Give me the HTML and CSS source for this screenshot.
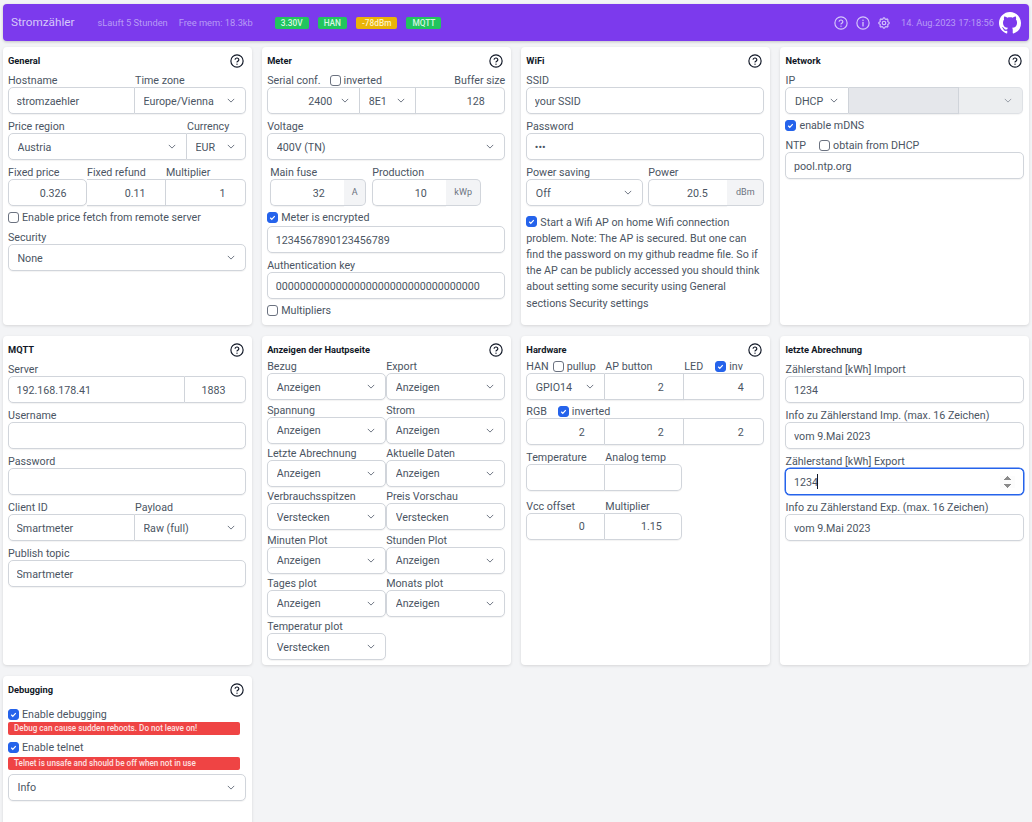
FILE: index.html
```html
<!DOCTYPE html>
<html lang="en">
<head>
    <meta charset="UTF-8">
    <meta name="viewport" content="width=device-width, initial-scale=1.0">
    <title>Stromzähler</title>
    <link rel="stylesheet" href="styles.css">
</head>
<body>
    <svg class="defs" width="0" height="0">
        <symbol id="help" viewBox="0 0 24 24">
            <circle cx="12" cy="12" r="10.5" fill="none" stroke="currentColor" stroke-width="2"/>
            <path d="M8.8 9a3.3 3.3 0 0 1 6.4 1c0 2.2-3.2 3-3.2 3.6" fill="none" stroke="currentColor" stroke-width="2" stroke-linecap="round"/>
            <circle cx="12" cy="17.4" r="1.2" fill="currentColor"/>
        </symbol>
        <symbol id="info" viewBox="0 0 24 24">
            <circle cx="12" cy="12" r="10.5" fill="none" stroke="currentColor" stroke-width="2"/>
            <path d="M12 11v6" fill="none" stroke="currentColor" stroke-width="2.2" stroke-linecap="round"/>
            <circle cx="12" cy="7.4" r="1.3" fill="currentColor"/>
        </symbol>
        <symbol id="gear" viewBox="0 0 24 24">
            <path d="M10.325 4.317c.426-1.756 2.924-1.756 3.35 0a1.724 1.724 0 002.573 1.066c1.543-.94 3.31.826 2.37 2.37a1.724 1.724 0 001.065 2.572c1.756.426 1.756 2.924 0 3.35a1.724 1.724 0 00-1.066 2.573c.94 1.543-.826 3.31-2.37 2.37a1.724 1.724 0 00-2.572 1.065c-.426 1.756-2.924 1.756-3.35 0a1.724 1.724 0 00-2.573-1.066c-1.543.94-3.31-.826-2.37-2.37a1.724 1.724 0 00-1.065-2.572c-1.756-.426-1.756-2.924 0-3.35a1.724 1.724 0 001.066-2.573c-.94-1.543.826-3.31 2.37-2.37.996.608 2.296.07 2.572-1.065z" fill="none" stroke="currentColor" stroke-width="2"/>
            <circle cx="12" cy="12" r="3" fill="none" stroke="currentColor" stroke-width="2"/>
        </symbol>
    </svg>

    <header class="topbar">
        <span class="brand">Stromzähler</span>
        <span class="stat stat-up">sLauft 5 Stunden</span>
        <span class="stat stat-mem">Free mem: 18.3kb</span>
        <span class="badge green first">3.30V</span>
        <span class="badge green">HAN</span>
        <span class="badge yellow">-78dBm</span>
        <span class="badge green">MQTT</span>
        <div class="topbar-right">
            <svg class="top-icon"><use href="#help"/></svg>
            <svg class="top-icon"><use href="#info"/></svg>
            <svg class="top-icon"><use href="#gear"/></svg>
            <span class="clock">14. Aug.2023 17:18:56</span>
            <svg class="github" viewBox="0 0 16 16"><path fill="#fff" d="M8 0C3.58 0 0 3.58 0 8c0 3.54 2.29 6.53 5.47 7.59.4.07.55-.17.55-.38 0-.19-.01-.82-.01-1.49-2.01.37-2.53-.49-2.69-.94-.09-.23-.48-.94-.82-1.13-.28-.15-.68-.52-.01-.53.63-.01 1.08.58 1.23.82.72 1.21 1.87.87 2.33.66.07-.52.28-.87.51-1.07-1.78-.2-3.64-.89-3.64-3.95 0-.87.31-1.59.82-2.15-.08-.2-.36-1.02.08-2.12 0 0 .67-.21 2.2.82.64-.18 1.32-.27 2-.27.68 0 1.36.09 2 .27 1.53-1.04 2.2-.82 2.2-.82.44 1.1.16 1.92.08 2.12.51.56.82 1.27.82 2.15 0 3.07-1.87 3.75-3.65 3.95.29.25.54.73.54 1.48 0 1.07-.01 1.93-.01 2.2 0 .21.15.46.55.38A8.013 8.013 0 0016 8c0-4.42-3.58-8-8-8z"/></svg>
        </div>
    </header>

    <main class="cards">
        <!-- first row -->
        <section class="card">
            <div class="card-head"><strong>General</strong><svg class="help"><use href="#help"/></svg></div>
            <div class="row cols-host">
                <label>Hostname</label><label>Time zone</label>
                <input class="ctl join-l" type="text" value="stromzaehler">
                <select class="ctl join-r"><option>Europe/Vienna</option></select>
            </div>
            <div class="row cols-price">
                <label>Price region</label><label>Currency</label>
                <select class="ctl join-l"><option>Austria</option></select>
                <select class="ctl join-r"><option>EUR</option></select>
            </div>
            <div class="row cols-3">
                <label>Fixed price</label><label>Fixed refund</label><label>Multiplier</label>
                <input class="ctl num" type="text" value="0.326">
                <input class="ctl num join-m" type="text" value="0.11">
                <input class="ctl num join-r" type="text" value="1">
            </div>
            <label class="chk"><input type="checkbox">Enable price fetch from remote server</label>
            <div class="row">
                <label>Security</label>
                <select class="ctl"><option>None</option></select>
            </div>
        </section>

        <section class="card">
            <div class="card-head"><strong>Meter</strong><svg class="help"><use href="#help"/></svg></div>
            <div class="row cols-serial">
                <div class="label-line span-all">
                    <label>Serial conf.</label>
                    <label class="chk chk-inline ml-serial"><input type="checkbox">inverted</label>
                    <label class="push">Buffer size</label>
                </div>
                <select class="ctl join-l sel-right"><option>2400</option></select>
                <select class="ctl join-m"><option>8E1</option></select>
                <input class="ctl num join-r" type="text" value="128">
            </div>
            <div class="row">
                <label>Voltage</label>
                <select class="ctl"><option>400V (TN)</option></select>
            </div>
            <div class="row cols-fuse">
                <label>Main fuse</label><label>Production</label>
                <div class="joined"><input class="ctl num join-l" type="text" value="32"><span class="addon">A</span></div>
                <div class="joined"><input class="ctl num join-l" type="text" value="10"><span class="addon addon-wide">kWp</span></div>
            </div>
            <label class="chk chk-tall"><input type="checkbox" checked>Meter is encrypted</label>
            <input class="ctl block" type="text" value="1234567890123456789">
            <div class="row">
                <label>Authentication key</label>
                <input class="ctl" type="text" value="0000000000000000000000000000000000">
            </div>
            <label class="chk"><input type="checkbox">Multipliers</label>
        </section>

        <section class="card">
            <div class="card-head"><strong>WiFi</strong><svg class="help"><use href="#help"/></svg></div>
            <div class="row">
                <label>SSID</label>
                <input class="ctl" type="text" value="your SSID">
            </div>
            <div class="row">
                <label>Password</label>
                <input class="ctl" type="password" value="***">
            </div>
            <div class="row cols-power">
                <label>Power saving</label><label>Power</label>
                <select class="ctl"><option>Off</option></select>
                <div class="joined"><input class="ctl num join-l" type="text" value="20.5"><span class="addon addon-dbm">dBm</span></div>
            </div>
            <p class="note"><input type="checkbox" checked>Start a Wifi AP on home Wifi connection problem. Note: The AP is secured. But one can find the password on my github readme file. So if the AP can be publicly accessed you should think about setting some security using General sections Security settings</p>
        </section>

        <section class="card">
            <div class="card-head"><strong>Network</strong><svg class="help"><use href="#help"/></svg></div>
            <div class="row cols-ip">
                <label class="span-all">IP</label>
                <select class="ctl join-l"><option>DHCP</option></select>
                <input class="ctl join-m" type="text" disabled>
                <select class="ctl join-r" disabled><option></option></select>
            </div>
            <label class="chk"><input type="checkbox" checked>enable mDNS</label>
            <div class="row">
                <div class="label-line">
                    <label>NTP</label>
                    <label class="chk chk-inline ml-ntp"><input type="checkbox">obtain from DHCP</label>
                </div>
                <input class="ctl" type="text" value="pool.ntp.org">
            </div>
        </section>

        <!-- second row -->
        <section class="card">
            <div class="card-head"><strong>MQTT</strong><svg class="help"><use href="#help"/></svg></div>
            <div class="row cols-server">
                <label class="span-all">Server</label>
                <input class="ctl join-l" type="text" value="192.168.178.41">
                <input class="ctl num join-r" type="text" value="1883">
            </div>
            <div class="row">
                <label>Username</label>
                <input class="ctl" type="text">
            </div>
            <div class="row">
                <label>Password</label>
                <input class="ctl" type="password">
            </div>
            <div class="row cols-host">
                <label>Client ID</label><label>Payload</label>
                <input class="ctl join-l" type="text" value="Smartmeter">
                <select class="ctl join-r"><option>Raw (full)</option></select>
            </div>
            <div class="row">
                <label>Publish topic</label>
                <input class="ctl" type="text" value="Smartmeter">
            </div>
        </section>

        <section class="card">
            <div class="card-head"><strong>Anzeigen der Hautpseite</strong><svg class="help"><use href="#help"/></svg></div>
            <div class="row tight cols-2">
                <label>Bezug</label><label>Export</label>
                <select class="ctl"><option>Anzeigen</option></select>
                <select class="ctl"><option>Anzeigen</option></select>
            </div>
            <div class="row tight cols-2">
                <label>Spannung</label><label>Strom</label>
                <select class="ctl"><option>Anzeigen</option></select>
                <select class="ctl"><option>Anzeigen</option></select>
            </div>
            <div class="row tight cols-2">
                <label>Letzte Abrechnung</label><label>Aktuelle Daten</label>
                <select class="ctl"><option>Anzeigen</option></select>
                <select class="ctl"><option>Anzeigen</option></select>
            </div>
            <div class="row tight cols-2">
                <label>Verbrauchsspitzen</label><label>Preis Vorschau</label>
                <select class="ctl"><option>Verstecken</option></select>
                <select class="ctl"><option>Verstecken</option></select>
            </div>
            <div class="row tight cols-2">
                <label>Minuten Plot</label><label>Stunden Plot</label>
                <select class="ctl"><option>Anzeigen</option></select>
                <select class="ctl"><option>Anzeigen</option></select>
            </div>
            <div class="row tight cols-2">
                <label>Tages plot</label><label>Monats plot</label>
                <select class="ctl"><option>Anzeigen</option></select>
                <select class="ctl"><option>Anzeigen</option></select>
            </div>
            <div class="row tight cols-2">
                <label>Temperatur plot</label><span></span>
                <select class="ctl"><option>Verstecken</option></select>
            </div>
        </section>

        <section class="card">
            <div class="card-head"><strong>Hardware</strong><svg class="help"><use href="#help"/></svg></div>
            <div class="row tight cols-3">
                <div class="label-line">
                    <label>HAN</label>
                    <label class="chk chk-inline ml-han"><input type="checkbox">pullup</label>
                </div>
                <label>AP button</label>
                <div class="label-line">
                    <label>LED</label>
                    <label class="chk chk-inline ml-led"><input type="checkbox" checked>inv</label>
                </div>
                <select class="ctl join-l"><option>GPIO14</option></select>
                <input class="ctl num join-m" type="text" value="2">
                <input class="ctl num join-r" type="text" value="4">
            </div>
            <div class="row mid cols-3">
                <div class="label-line span-all">
                    <label>RGB</label>
                    <label class="chk chk-inline ml-rgb"><input type="checkbox" checked>inverted</label>
                </div>
                <input class="ctl num join-l" type="text" value="2">
                <input class="ctl num join-m" type="text" value="2">
                <input class="ctl num join-r" type="text" value="2">
            </div>
            <div class="row cols-hw2">
                <label>Temperature</label><label>Analog temp</label>
                <input class="ctl join-l" type="text">
                <input class="ctl join-r" type="text">
            </div>
            <div class="row wide cols-hw2">
                <label>Vcc offset</label><label>Multiplier</label>
                <input class="ctl num join-l" type="text" value="0">
                <input class="ctl num join-r" type="text" value="1.15">
            </div>
        </section>

        <section class="card">
            <div class="card-head"><strong>letzte Abrechnung</strong></div>
            <div class="row">
                <label>Zählerstand [kWh] Import</label>
                <input class="ctl" type="text" value="1234">
            </div>
            <div class="row">
                <label>Info zu Zählerstand Imp. (max. 16 Zeichen)</label>
                <input class="ctl" type="text" value="vom 9.Mai 2023">
            </div>
            <div class="row">
                <label>Zählerstand [kWh] Export</label>
                <div class="focus-wrap">
                    <input class="ctl active" type="number" value="1234" autofocus>
                    <span class="caret"></span>
                </div>
            </div>
            <div class="row">
                <label>Info zu Zählerstand Exp. (max. 16 Zeichen)</label>
                <input class="ctl" type="text" value="vom 9.Mai 2023">
            </div>
        </section>

        <!-- third row -->
        <section class="card">
            <div class="card-head"><strong>Debugging</strong><svg class="help"><use href="#help"/></svg></div>
            <label class="chk chk-first"><input type="checkbox" checked>Enable debugging</label>
            <div class="alert">Debug can cause sudden reboots. Do not leave on!</div>
            <label class="chk chk-second"><input type="checkbox" checked>Enable telnet</label>
            <div class="alert alert-gap">Telnet is unsafe and should be off when not in use</div>
            <select class="ctl block debug-level"><option>Info</option></select>
        </section>
    </main>
</body>
</html>
```

FILE: styles.css
```css
* {
    box-sizing: border-box;
}

html, body {
    height: 100vh;
    overflow: hidden;
}

body {
    margin: 0;
    padding: 4px 3px 0;
    background-color: #f3f4f6;
    font-family: Roboto, sans-serif;
    font-size: 10.7px;
    line-height: 13px;
    color: #4b5563;
}

.defs {
    position: absolute;
}

/* top bar */
.topbar {
    display: flex;
    align-items: center;
    height: 37px;
    padding: 0 8px;
    background-color: #7c3aed;
    border-radius: 4px;
    box-shadow: 0 1px 3px rgba(0, 0, 0, 0.2);
    color: #d6c8fa;
}

.brand {
    font-size: 11.75px;
    margin-right: 23px;
}

.stat {
    font-size: 9.3px;
    color: #b79cf5;
}

.stat-mem {
    margin-left: 11px;
    margin-right: 22px;
}

.badge {
    height: 12px;
    line-height: 12px;
    padding: 0 6px;
    margin-right: 9px;
    border-radius: 2px;
    font-size: 8.3px;
    font-weight: 500;
    color: #d9f5e3;
}

.badge.green {
    background-color: #22c55e;
}

.badge.yellow {
    background-color: #eab308;
    color: #fdf3c7;
}

.topbar-right {
    display: flex;
    align-items: center;
    margin-left: auto;
}

.top-icon {
    width: 14px;
    height: 14px;
    margin-right: 7.5px;
    color: #d6c8fa;
}

.clock {
    font-size: 9.3px;
    margin-left: 2px;
    color: #b79cf5;
}

.github {
    width: 22px;
    height: 22px;
    margin-left: 5px;
}

/* cards */
.cards {
    display: grid;
    grid-template-columns: repeat(4, 1fr);
    grid-template-rows: 278px 329px 160px;
    column-gap: 10.67px;
    row-gap: 11px;
    margin-top: 6px;
}

.card {
    background-color: #fff;
    border-radius: 4px;
    box-shadow: 0 1px 3px rgba(0, 0, 0, 0.12);
    padding: 6px 5.5px 0 5px;
}

.card-head {
    display: flex;
    justify-content: space-between;
    align-items: center;
    height: 15px;
}

.card-head strong {
    font-size: 9.3px;
    color: #111827;
}

.help {
    width: 14px;
    height: 14px;
    margin-right: 2px;
    color: #111827;
}

/* rows with labels above their controls */
.row {
    display: grid;
    grid-template-rows: 19px 27px;
    grid-template-columns: 1fr;
}

.row label,
.label-line {
    align-self: end;
}

.row.tight { grid-template-rows: 16.33px 27px; }
.row.mid { grid-template-rows: 18px 27px; }
.row.wide { grid-template-rows: 21.6px 27px; }

.cols-host { grid-template-columns: 127px 111px; }
.cols-price { grid-template-columns: 179px 59px; }
.cols-3 { grid-template-columns: 79px 79px 80px; }
.cols-2 { grid-template-columns: 119px 119px; }
.cols-serial { grid-template-columns: 93px 56px 89px; }
.cols-fuse { grid-template-columns: 96px 109px; column-gap: 6px; margin-left: 3px; }
.cols-power { grid-template-columns: 117px 116px; column-gap: 5px; }
.cols-ip { grid-template-columns: 64px 110px 64px; }
.cols-server { grid-template-columns: 177px 61px; }
.cols-hw2 { grid-template-columns: 79px 77px; }

.span-all {
    grid-column: 1 / -1;
}

.label-line {
    display: flex;
    align-items: center;
    white-space: nowrap;
}

.push { margin-left: auto; }
.ml-serial { margin-left: 9px; }
.ml-ntp { margin-left: 13px; }
.ml-han { margin-left: 4px; }
.ml-led { margin-left: 12px; }
.ml-rgb { margin-left: 11px; }

/* inputs and selects */
.ctl {
    display: block;
    width: 100%;
    height: 27px;
    min-width: 0;
    margin: 0;
    padding: 1px 7.5px 0;
    background-color: #fff;
    border: 1px solid #d1d5db;
    border-radius: 5px;
    box-shadow: 0 1px 1px rgba(0, 0, 0, 0.05);
    font-family: inherit;
    font-size: 10.7px;
    color: #4b5563;
    outline: none;
}

select.ctl {
    appearance: none;
    padding-left: 8.5px;
    padding-right: 20px;
    background-image: url("data:image/svg+xml,%3Csvg xmlns='http://www.w3.org/2000/svg' viewBox='0 0 10 6'%3E%3Cpath d='M1 1l4 4 4-4' fill='none' stroke='%236b7280' stroke-width='1.2'/%3E%3C/svg%3E");
    background-repeat: no-repeat;
    background-position: right 10.5px top 10px;
    background-size: 8px 5px;
}

select.sel-right {
    text-align: right;
    text-align-last: right;
    padding-right: 27px;
}

.ctl.num {
    text-align: right;
    padding-right: 19.5px;
}

.block {
    margin: 0;
}

.join-l { border-radius: 5px 0 0 5px; }
.join-m { border-radius: 0; border-left: 0; }
.join-r { border-radius: 0 5px 5px 0; border-left-width: 0; }

.ctl:disabled {
    background-color: #e5e7eb;
}

.ctl.active {
    border-color: #2563eb;
    box-shadow: 0 0 0 0.5px #2563eb;
    caret-color: transparent;
}

.focus-wrap {
    position: relative;
}

.caret {
    position: absolute;
    left: 32px;
    top: 6px;
    width: 1px;
    height: 15px;
    background-color: #111827;
}

.joined {
    display: flex;
}

.joined .ctl {
    flex: 1;
    border-right: 0;
}

.addon {
    display: flex;
    align-items: center;
    justify-content: center;
    flex: none;
    width: 22px;
    height: 27px;
    background-color: #f3f4f6;
    border: 1px solid #d1d5db;
    border-left: 0;
    border-radius: 0 5px 5px 0;
    font-size: 9px;
    color: #6b7280;
}

.addon-wide { width: 35px; }
.addon-dbm { width: 37px; }

/* checkboxes */
input[type="checkbox"] {
    appearance: none;
    flex: none;
    display: inline-block;
    width: 11px;
    height: 11px;
    margin: 0 3px 0 0;
    vertical-align: -1px;
    background-color: #fff;
    border: 1px solid #6b7280;
    border-radius: 3px;
}

input[type="checkbox"]:checked {
    background-color: #2563eb;
    border-color: #2563eb;
    background-image: url("data:image/svg+xml,%3Csvg xmlns='http://www.w3.org/2000/svg' viewBox='0 0 16 16'%3E%3Cpath d='M4 8.5l2.7 2.7L12 5.5' fill='none' stroke='%23fff' stroke-width='2.2'/%3E%3C/svg%3E");
    background-size: 100% 100%;
}

.chk {
    display: flex;
    align-items: flex-end;
    height: 19px;
    padding-bottom: 1px;
    white-space: nowrap;
}

.chk input {
    margin-bottom: 1px;
}

.chk-tall { height: 20px; padding-bottom: 2px; }
.chk-first { height: 24.5px; }
.chk-second { height: 18.5px; padding-bottom: 0; }

.row .chk-inline,
.chk-inline {
    display: inline-flex;
    align-items: center;
    height: 13px;
    padding-bottom: 0;
}

.chk-inline input {
    margin-bottom: 0;
}

.note {
    margin: 8.5px 0 0;
    line-height: 16.2px;
}

/* debugging warnings */
.alert {
    width: 232px;
    height: 13.5px;
    padding-left: 6px;
    background-color: #ef4444;
    border-radius: 2px;
    font-size: 8.15px;
    font-weight: 500;
    line-height: 13.5px;
    color: #fde2e2;
    white-space: nowrap;
}

.alert-gap {
    margin-top: 3px;
}

.debug-level {
    margin-top: 3.5px;
}
```
